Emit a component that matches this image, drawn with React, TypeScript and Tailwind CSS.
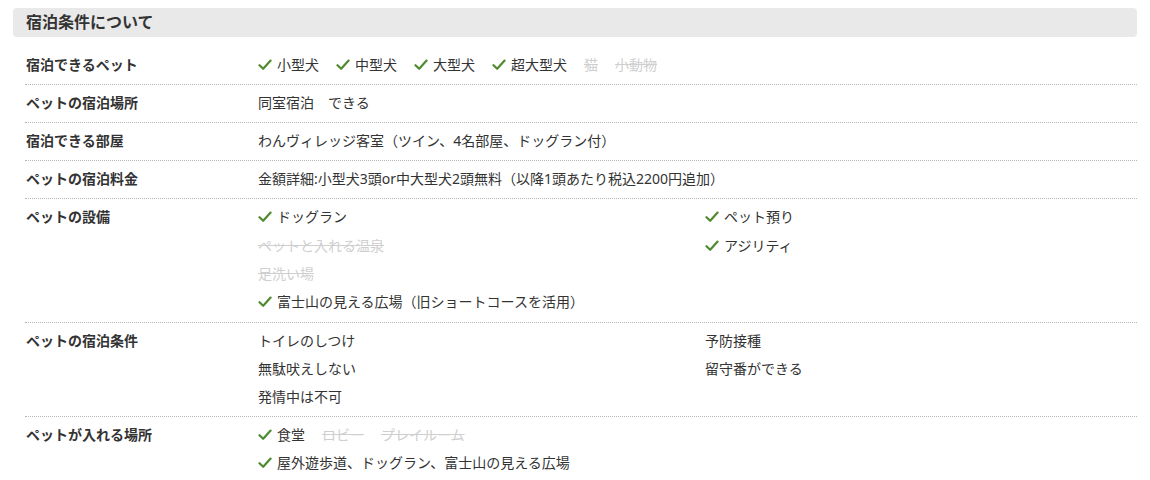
import type { ReactNode } from 'react';

type Item = { label: string; ok: boolean; mark?: boolean };

function Check() {
  return (
    <svg width="14" height="12" viewBox="0 0 14 12" className="mr-[5px] shrink-0">
      <path d="M1.5 6.2 L5.2 9.8 L12.6 1.6" fill="none" stroke="#4e8a2e" strokeWidth="2.2" strokeLinecap="round" strokeLinejoin="round" />
    </svg>
  );
}

function Entry({ item }: { item: Item }) {
  if (!item.ok) {
    return <span className="text-[#cfcfcf] line-through">{item.label}</span>;
  }
  return (
    <span className="inline-flex items-center">
      {item.mark !== false && <Check />}
      <span>{item.label}</span>
    </span>
  );
}

function Row({ label, children }: { label: string; children: ReactNode }) {
  return (
    <div className="flex border-b border-dotted border-[#b5b5b5] pt-[4px] pb-[5px] leading-[28px]">
      <div className="w-[233px] shrink-0 pl-[1px] font-bold text-[#333]">{label}</div>
      <div className="flex-1 text-[#333]">{children}</div>
    </div>
  );
}

const pets: Item[] = [
  { label: '小型犬', ok: true },
  { label: '中型犬', ok: true },
  { label: '大型犬', ok: true },
  { label: '超大型犬', ok: true },
  { label: '猫', ok: false },
  { label: '小動物', ok: false },
];

const facilitiesLeft: Item[] = [
  { label: 'ドッグラン', ok: true },
  { label: 'ペットと入れる温泉', ok: false },
  { label: '足洗い場', ok: false },
  { label: '富士山の見える広場（旧ショートコースを活用）', ok: true },
];

const facilitiesRight: Item[] = [
  { label: 'ペット預り', ok: true },
  { label: 'アジリティ', ok: true },
];

const places: Item[] = [
  { label: '食堂', ok: true },
  { label: 'ロビー', ok: false },
  { label: 'プレイルーム', ok: false },
];

export default function App() {
  return (
    <div
      className="bg-white px-[13px] pt-[8px] text-[14px] text-[#333]"
      style={{ fontFamily: '"Noto Sans", "Noto Sans CJK JP", sans-serif' }}
    >
      <h2 className="rounded-[4px] bg-[#e9e9e9] px-[13px] text-[16px] font-bold leading-[29px] text-[#333]">
        宿泊条件について
      </h2>

      <div className="ml-[12px] mt-[10px]">
        <Row label="宿泊できるペット">
          <div className="flex flex-wrap gap-x-[17px]">
            {pets.map((p) => (
              <Entry key={p.label} item={p} />
            ))}
          </div>
        </Row>

        <Row label="ペットの宿泊場所">同室宿泊　できる</Row>

        <Row label="宿泊できる部屋">わんヴィレッジ客室（ツイン、4名部屋、ドッグラン付）</Row>

        <Row label="ペットの宿泊料金">金額詳細:小型犬3頭or中大型犬2頭無料（以降1頭あたり税込2200円追加）</Row>

        <Row label="ペットの設備">
          <div className="grid grid-cols-[447px_1fr]">
            <ul>
              {facilitiesLeft.map((f) => (
                <li key={f.label}>
                  <Entry item={f} />
                </li>
              ))}
            </ul>
            <ul>
              {facilitiesRight.map((f) => (
                <li key={f.label}>
                  <Entry item={f} />
                </li>
              ))}
            </ul>
          </div>
        </Row>

        <Row label="ペットの宿泊条件">
          <div className="grid grid-cols-[447px_1fr]">
            <ul>
              <li>トイレのしつけ</li>
              <li>無駄吠えしない</li>
              <li>発情中は不可</li>
            </ul>
            <ul>
              <li>予防接種</li>
              <li>留守番ができる</li>
            </ul>
          </div>
        </Row>

        <div className="flex pt-[4px] pb-[5px] leading-[28px]">
          <div className="w-[233px] shrink-0 pl-[1px] font-bold">ペットが入れる場所</div>
          <div className="flex-1">
            <div className="flex flex-wrap gap-x-[17px]">
              {places.map((p) => (
                <Entry key={p.label} item={p} />
              ))}
            </div>
            <Entry item={{ label: '屋外遊歩道、ドッグラン、富士山の見える広場', ok: true }} />
          </div>
        </div>
      </div>
    </div>
  );
}
